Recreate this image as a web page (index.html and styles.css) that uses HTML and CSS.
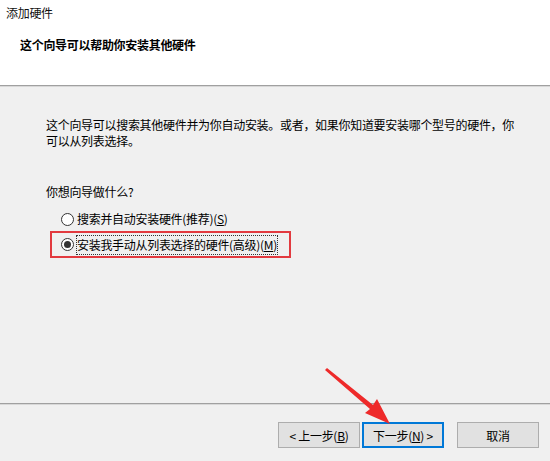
FILE: index.html
```html
<!DOCTYPE html>
<html lang="zh">
<head>
<meta charset="utf-8">
<link rel="stylesheet" href="styles.css">
</head>
<body>
<div class="window">
  <div class="header">
    <div class="title">添加硬件</div>
    <div class="heading">这个向导可以帮助你安装其他硬件</div>
  </div>
  <div class="sep"></div>
  <div class="content">
    <p class="desc">这个向导可以搜索其他硬件并为你自动安装。或者，如果你知道要安装哪个型号的硬件，你<br>可以从列表选择。</p>
    <p class="question">你想向导做什么?</p>
    <div class="options">
      <label class="option"><span class="radio"></span><span class="label">搜索并自动安装硬件(推荐)(<u>S</u>)</span></label>
      <div class="highlight">
        <label class="option"><span class="radio checked"></span><span class="label focus">安装我手动从列表选择的硬件(高级)(<u>M</u>)</span></label>
      </div>
    </div>
  </div>
  <div class="sep bottom"></div>
  <div class="footer">
    <div class="btn-group">
      <button class="btn">&lt; 上一步(<u>B</u>)</button>
      <button class="btn default">下一步(<u>N</u>) &gt;</button>
    </div>
    <button class="btn cancel">取消</button>
  </div>
  <svg class="arrow" width="90" height="70" viewBox="0 0 90 70">
    <polygon points="9,8 11,6 57,43 61,37 74,62 49,51 54,47" fill="#ee2a2a"/>
  </svg>
</div>
</body>
</html>
```
FILE: styles.css
```css
html, body {
  margin: 0;
  padding: 0;
}
body {
  width: 550px;
  height: 461px;
  overflow: hidden;
  background: #f0f0f0;
  font-family: "Noto Sans CJK SC", "Microsoft YaHei", sans-serif;
  font-size: 12px;
  letter-spacing: -0.3px;
  color: #000;
}
.window {
  position: relative;
  width: 550px;
  height: 461px;
  display: flex;
  flex-direction: column;
}
.header {
  background: #fff;
  height: 85px;
  padding: 5px 0 0 6px;
  box-sizing: border-box;
}
.title {
  line-height: 16px;
  color: #111;
}
.heading {
  font-weight: bold;
  line-height: 16px;
  margin: 16px 0 0 14px;
}
.sep {
  height: 1px;
  background: #a0a0a0;
  border-bottom: 1px solid #d8d8d8;
}
.content {
  height: 316px;
  padding: 30px 0 0 46px;
  box-sizing: border-box;
}
.desc {
  margin: 0;
  line-height: 16px;
}
.question {
  margin: 35px 0 0 0;
  line-height: 16px;
}
.options {
  margin: 9px 0 0 4px;
  display: flex;
  flex-direction: column;
}
.option {
  display: flex;
  align-items: center;
  height: 20px;
  gap: 3px;
  padding-left: 11px;
}
.radio {
  width: 11px;
  height: 11px;
  border: 1px solid #333;
  border-radius: 50%;
  background: #fff;
  position: relative;
  flex: none;
}
.radio.checked::after {
  content: "";
  position: absolute;
  left: 2px;
  top: 2px;
  width: 7px;
  height: 7px;
  border-radius: 50%;
  background: #333;
}
.label {
  line-height: 16px;
  padding: 1px 0;
}
.label.focus {
  outline: 1px dotted #333;
  outline-offset: 0;
}
.highlight {
  margin: 2px 0 0 0;
  width: 241px;
  height: 27px;
  box-sizing: border-box;
  border: 2px solid #e23a3f;
  display: flex;
  align-items: center;
}
.highlight .option {
  padding-left: 9px;
}
.footer {
  display: flex;
  align-items: flex-start;
  padding: 17px 0 0 278px;
}
.btn-group {
  display: flex;
  gap: 2px;
}
.btn {
  width: 82px;
  height: 26px;
  box-sizing: border-box;
  background: #e1e1e1;
  border: 1px solid #adadad;
  font-family: inherit;
  font-size: 12px;
  letter-spacing: -0.3px;
  color: #000;
  padding: 0;
  margin: 0;
}
.btn.default {
  border: 2px solid #0078d7;
}
.btn.cancel {
  margin-left: 13px;
}
.arrow {
  position: absolute;
  left: 316px;
  top: 362px;
}
```
